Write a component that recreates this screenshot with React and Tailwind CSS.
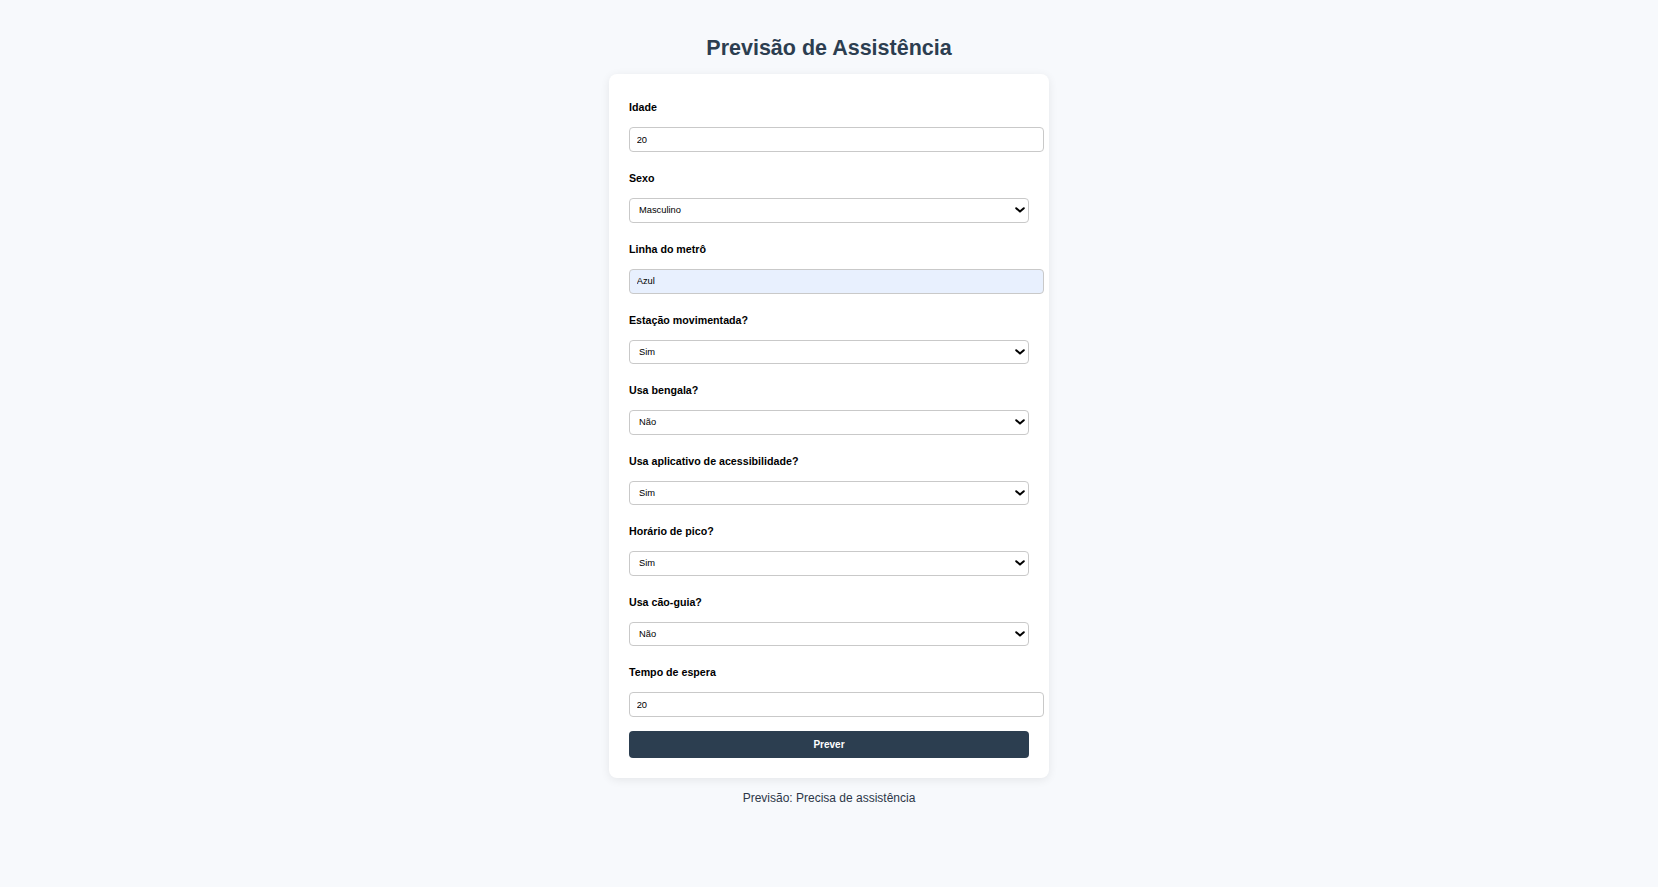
import React, { useState } from 'react';

// campos do formulário
const FIELDS = [
    { id: 'idade', label: 'Idade', type: 'input', value: '20' },
    { id: 'sexo', label: 'Sexo', type: 'select', value: 'Masculino', options: ['Masculino', 'Feminino'] },
    { id: 'linha', label: 'Linha do metrô', type: 'input', value: 'Azul', autofill: true },
    { id: 'estacao', label: 'Estação movimentada?', type: 'select', value: 'Sim', options: ['Sim', 'Não'] },
    { id: 'bengala', label: 'Usa bengala?', type: 'select', value: 'Não', options: ['Sim', 'Não'] },
    { id: 'app', label: 'Usa aplicativo de acessibilidade?', type: 'select', value: 'Sim', options: ['Sim', 'Não'] },
    { id: 'pico', label: 'Horário de pico?', type: 'select', value: 'Sim', options: ['Sim', 'Não'] },
    { id: 'cao', label: 'Usa cão-guia?', type: 'select', value: 'Não', options: ['Sim', 'Não'] },
    { id: 'tempo', label: 'Tempo de espera', type: 'input', value: '20' },
];

const Field = ({ field, value, onChange, last }) => {
    return (
        <div className={last ? '' : 'mb-[20px]'}>
            <label htmlFor={field.id} className="block text-[10.67px] font-bold leading-[12px] text-black mb-[14px]">
                {field.label}
            </label>
            {field.type === 'input' ? (
                <input
                    id={field.id}
                    type="text"
                    value={value}
                    onChange={(e) => onChange(field.id, e.target.value)}
                    className={`block w-[415px] h-[25px] px-[6.67px] border border-[#c9c9c9] rounded-[4px] text-[9.33px] text-black outline-none ${field.autofill ? 'bg-[#e8f0fe]' : 'bg-white'}`}
                />
            ) : (
                <div className="relative w-[400px]">
                    <select
                        id={field.id}
                        value={value}
                        onChange={(e) => onChange(field.id, e.target.value)}
                        className="block w-full h-[24.5px] py-0 pl-[9px] pr-[20px] border border-[#c9c9c9] rounded-[4px] bg-white text-[9.33px] leading-[22.5px] text-black appearance-none outline-none"
                    >
                        {field.options.map((opt) => (
                            <option key={opt} value={opt}>{opt}</option>
                        ))}
                    </select>
                    <svg
                        className="absolute right-[4px] top-1/2 -translate-y-1/2 pointer-events-none"
                        width="10" height="6" viewBox="0 0 10 6" fill="none"
                    >
                        <path d="M1.2 1.2L5 4.6L8.8 1.2" stroke="#000" strokeWidth="2" strokeLinecap="round" strokeLinejoin="round" />
                    </svg>
                </div>
            )}
        </div>
    );
};

const App = () => {
    const [values, setValues] = useState(
        FIELDS.reduce((acc, f) => ({ ...acc, [f.id]: f.value }), {})
    );
    const [result, setResult] = useState('Precisa de assistência');

    const handleChange = (id, v) => {
        setValues((prev) => ({ ...prev, [id]: v }));
    };

    const handleSubmit = (e) => {
        e.preventDefault();
        setResult('Precisa de assistência');
    };

    return (
        <div className="min-h-screen bg-[#f7f9fc] pt-[34px] font-['Liberation_Sans',Arial,sans-serif]">
            <h1 className="text-center text-[21.5px] leading-[28px] font-bold text-[#2c3e50] mb-[12px]">
                Previsão de Assistência
            </h1>

            <form
                onSubmit={handleSubmit}
                className="w-[440px] mx-auto bg-white rounded-[8px] p-[20px] pt-[27px] shadow-[0_2px_10px_rgba(0,0,0,0.08)]"
            >
                {FIELDS.map((f, i) => (
                    <Field
                        key={f.id}
                        field={f}
                        value={values[f.id]}
                        onChange={handleChange}
                        last={i === FIELDS.length - 1}
                    />
                ))}
                <button
                    type="submit"
                    className="block w-[400px] h-[27.7px] mt-[13.7px] bg-[#2c3e50] text-white text-[10px] font-bold rounded-[4px]"
                >
                    Prever
                </button>
            </form>

            <p className="mt-[13px] text-center text-[12px] leading-[14px] text-[#2d3748]">
                Previsão: {result}
            </p>
        </div>
    );
};

export default App;
